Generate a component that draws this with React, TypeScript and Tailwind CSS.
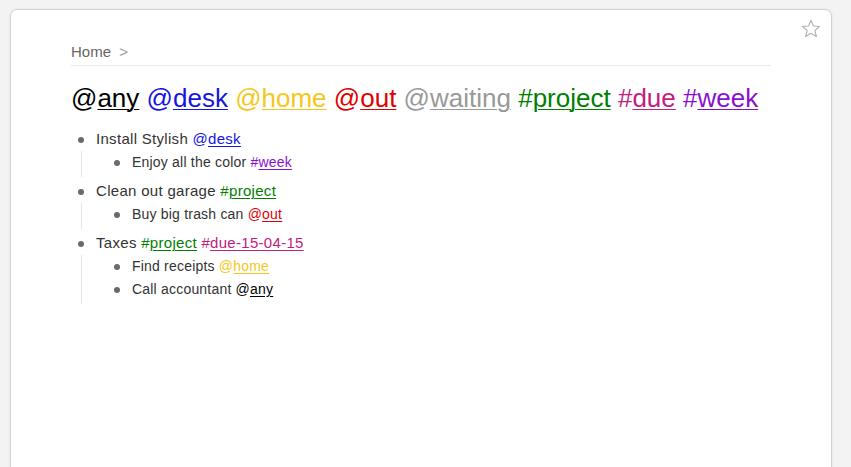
import React from "react";

const C = {
  any: "#000000",
  desk: "#1515de",
  home: "#f5c71a",
  out: "#e00000",
  waiting: "#999999",
  project: "#008000",
  due: "#c2207e",
  week: "#8a10d0",
};

function Tag({ sym, word, color }: { sym: string; word: string; color: string }) {
  return (
    <span style={{ color }}>
      {sym}
      <span className="underline decoration-1 underline-offset-2">{word}</span>
    </span>
  );
}

function Star() {
  return (
    <svg width="20" height="19" viewBox="0 0 24 23" fill="none" stroke="#b0b0b0" strokeWidth="1.3" strokeLinejoin="round">
      <path d="M12 1.5 L14.9 8.4 L22.4 9 L16.7 13.9 L18.5 21.2 L12 17.3 L5.5 21.2 L7.3 13.9 L1.6 9 L9.1 8.4 Z" />
    </svg>
  );
}

function Bullet() {
  return <span className="block w-[6px] h-[6px] rounded-full bg-[#6a6a6a]" />;
}

function Child({ children }: { children: React.ReactNode }) {
  return (
    <div className="flex items-center h-[23px]">
      <div className="w-[50px] shrink-0 pl-[32px]">
        <Bullet />
      </div>
      <div className="text-[14px] text-[#333] tracking-[0.2px]">{children}</div>
    </div>
  );
}

function Parent({ label, kids }: { label: React.ReactNode; kids: React.ReactNode }) {
  return (
    <div className="mb-[3px]">
      <div className="flex items-center h-[23px]">
        <div className="w-[25px] shrink-0 pl-[7px]">
          <Bullet />
        </div>
        <div className="text-[15px] text-[#333] tracking-[0.3px]">{label}</div>
      </div>
      <div className="ml-[10px] border-l border-[#e6e6e6] pb-[3px]">{kids}</div>
    </div>
  );
}

export default function App() {
  return (
    <div className="w-[851px] h-[467px] bg-[#f3f3f3] overflow-hidden" style={{ fontFamily: '"Liberation Sans", Arial, sans-serif' }}>
      <div className="relative ml-[10px] mt-[9px] w-[822px] h-[470px] bg-white border border-[#d2d2d2] rounded-t-[7px] shadow-[0_0_3px_rgba(0,0,0,0.08)] px-[60px] pt-[33px]">
        <div className="absolute right-[10px] top-[9px]">
          <Star />
        </div>
        <div className="border-b border-[#ebebeb] pb-[4px] text-[15px] text-[#666] leading-[18px]">
          Home <span className="text-[#999] ml-[4px]">&gt;</span>
        </div>
        <div className="mt-[16px] text-[26px] leading-[32px] whitespace-nowrap">
          <Tag sym="@" word="any" color={C.any} />{" "}
          <Tag sym="@" word="desk" color={C.desk} />{" "}
          <Tag sym="@" word="home" color={C.home} />{" "}
          <Tag sym="@" word="out" color={C.out} />{" "}
          <Tag sym="@" word="waiting" color={C.waiting} />{" "}
          <Tag sym="#" word="project" color={C.project} />{" "}
          <Tag sym="#" word="due" color={C.due} />{" "}
          <Tag sym="#" word="week" color={C.week} />
        </div>
        <div className="mt-[14px]">
          <Parent
            label={<>Install Stylish <Tag sym="@" word="desk" color={C.desk} /></>}
            kids={<Child>Enjoy all the color <Tag sym="#" word="week" color={C.week} /></Child>}
          />
          <Parent
            label={<>Clean out garage <Tag sym="#" word="project" color={C.project} /></>}
            kids={<Child>Buy big trash can <Tag sym="@" word="out" color={C.out} /></Child>}
          />
          <Parent
            label={<>Taxes <Tag sym="#" word="project" color={C.project} /> <Tag sym="#" word="due-15-04-15" color={C.due} /></>}
            kids={
              <>
                <Child>Find receipts <Tag sym="@" word="home" color={C.home} /></Child>
                <Child>Call accountant <Tag sym="@" word="any" color={C.any} /></Child>
              </>
            }
          />
        </div>
      </div>
    </div>
  );
}
